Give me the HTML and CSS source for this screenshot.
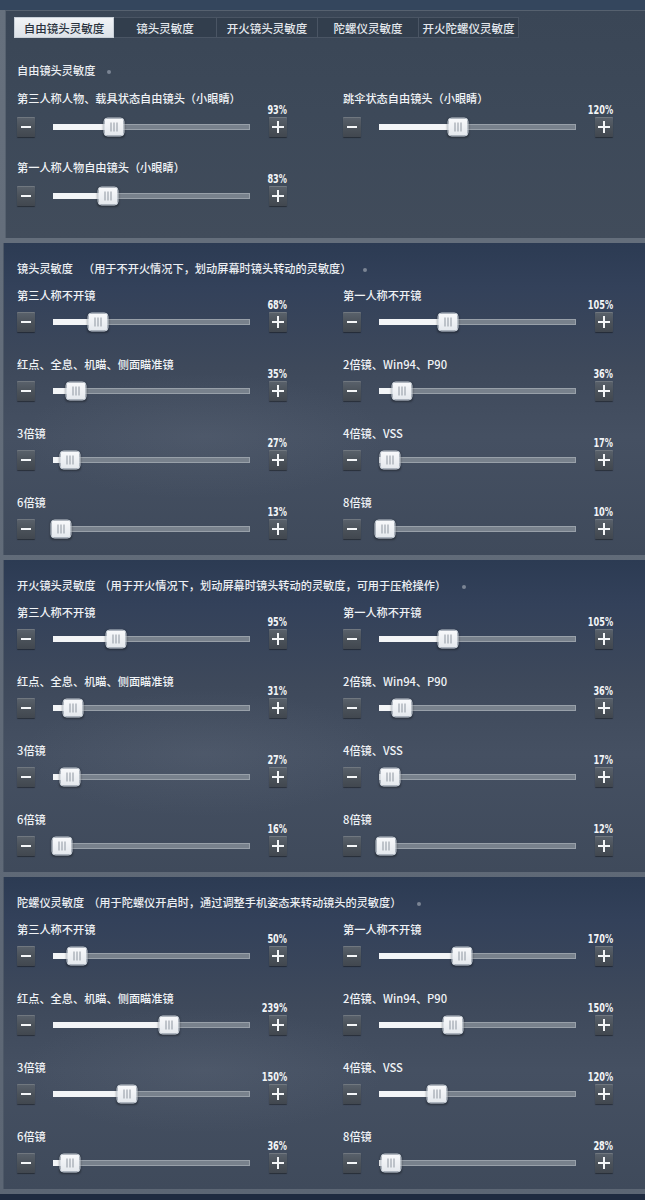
FILE: index.html
```html
<!DOCTYPE html>
<html lang="zh-CN">
<head>
<meta charset="utf-8">
<title>灵敏度设置</title>
<link rel="stylesheet" href="styles.css">
</head>
<body>
<div class="top-strip"></div>

<section class="panel panel-first">
  <nav class="tabs">
    <div class="tab tab-active t1">自由镜头灵敏度</div>
    <div class="tab t2">镜头灵敏度</div>
    <div class="tab t3">开火镜头灵敏度</div>
    <div class="tab t4">陀螺仪灵敏度</div>
    <div class="tab t5">开火陀螺仪灵敏度</div>
  </nav>
  <h2 class="title">自由镜头灵敏度<span class="dot"></span></h2>
  <div class="grid grid-roomy">
    <div class="row">
      <div class="label">第三人称人物、载具状态自由镜头（小眼睛）</div>
      <div class="ctrl">
        <div class="btn minus"></div>
        <div class="track"><div class="bar" style="--v:30.6%"><div class="fill"></div><div class="thumb"><i></i><i></i><i></i></div></div></div>
        <div class="end"><div class="pct">93%</div><div class="btn plus"></div></div>
      </div>
    </div>
    <div class="row">
      <div class="label">跳伞状态自由镜头（小眼睛）</div>
      <div class="ctrl">
        <div class="btn minus"></div>
        <div class="track"><div class="bar" style="--v:40%"><div class="fill"></div><div class="thumb"><i></i><i></i><i></i></div></div></div>
        <div class="end"><div class="pct">120%</div><div class="btn plus"></div></div>
      </div>
    </div>
    <div class="row">
      <div class="label">第一人称人物自由镜头（小眼睛）</div>
      <div class="ctrl">
        <div class="btn minus"></div>
        <div class="track"><div class="bar" style="--v:27.5%"><div class="fill"></div><div class="thumb"><i></i><i></i><i></i></div></div></div>
        <div class="end"><div class="pct">83%</div><div class="btn plus"></div></div>
      </div>
    </div>
  </div>
</section>

<section class="panel">
  <h2 class="title">镜头灵敏度<span class="note note-wide">（用于不开火情况下，划动屏幕时镜头转动的灵敏度）</span><span class="dot"></span></h2>
  <div class="grid">
    <div class="row"><div class="label">第三人称不开镜</div><div class="ctrl"><div class="btn minus"></div><div class="track"><div class="bar" style="--v:22.4%"><div class="fill"></div><div class="thumb"><i></i><i></i><i></i></div></div></div><div class="end"><div class="pct">68%</div><div class="btn plus"></div></div></div></div>
    <div class="row"><div class="label">第一人称不开镜</div><div class="ctrl"><div class="btn minus"></div><div class="track"><div class="bar" style="--v:34.7%"><div class="fill"></div><div class="thumb"><i></i><i></i><i></i></div></div></div><div class="end"><div class="pct">105%</div><div class="btn plus"></div></div></div></div>
    <div class="row"><div class="label">红点、全息、机瞄、侧面瞄准镜</div><div class="ctrl"><div class="btn minus"></div><div class="track"><div class="bar" style="--v:11.2%"><div class="fill"></div><div class="thumb"><i></i><i></i><i></i></div></div></div><div class="end"><div class="pct">35%</div><div class="btn plus"></div></div></div></div>
    <div class="row"><div class="label">2倍镜、Win94、P90</div><div class="ctrl"><div class="btn minus"></div><div class="track"><div class="bar" style="--v:11.2%"><div class="fill"></div><div class="thumb"><i></i><i></i><i></i></div></div></div><div class="end"><div class="pct">36%</div><div class="btn plus"></div></div></div></div>
    <div class="row"><div class="label">3倍镜</div><div class="ctrl"><div class="btn minus"></div><div class="track"><div class="bar" style="--v:8.2%"><div class="fill"></div><div class="thumb"><i></i><i></i><i></i></div></div></div><div class="end"><div class="pct">27%</div><div class="btn plus"></div></div></div></div>
    <div class="row"><div class="label">4倍镜、VSS</div><div class="ctrl"><div class="btn minus"></div><div class="track"><div class="bar" style="--v:5.1%"><div class="fill"></div><div class="thumb"><i></i><i></i><i></i></div></div></div><div class="end"><div class="pct">17%</div><div class="btn plus"></div></div></div></div>
    <div class="row"><div class="label">6倍镜</div><div class="ctrl"><div class="btn minus"></div><div class="track"><div class="bar" style="--v:3.6%"><div class="fill"></div><div class="thumb"><i></i><i></i><i></i></div></div></div><div class="end"><div class="pct">13%</div><div class="btn plus"></div></div></div></div>
    <div class="row"><div class="label">8倍镜</div><div class="ctrl"><div class="btn minus"></div><div class="track"><div class="bar" style="--v:2.5%"><div class="fill"></div><div class="thumb"><i></i><i></i><i></i></div></div></div><div class="end"><div class="pct">10%</div><div class="btn plus"></div></div></div></div>
  </div>
</section>

<section class="panel">
  <h2 class="title">开火镜头灵敏度<span class="note">（用于开火情况下，划动屏幕时镜头转动的灵敏度，可用于压枪操作）</span><span class="dot dot-far"></span></h2>
  <div class="grid">
    <div class="row"><div class="label">第三人称不开镜</div><div class="ctrl"><div class="btn minus"></div><div class="track"><div class="bar" style="--v:31.6%"><div class="fill"></div><div class="thumb"><i></i><i></i><i></i></div></div></div><div class="end"><div class="pct">95%</div><div class="btn plus"></div></div></div></div>
    <div class="row"><div class="label">第一人称不开镜</div><div class="ctrl"><div class="btn minus"></div><div class="track"><div class="bar" style="--v:35%"><div class="fill"></div><div class="thumb"><i></i><i></i><i></i></div></div></div><div class="end"><div class="pct">105%</div><div class="btn plus"></div></div></div></div>
    <div class="row"><div class="label">红点、全息、机瞄、侧面瞄准镜</div><div class="ctrl"><div class="btn minus"></div><div class="track"><div class="bar" style="--v:9.7%"><div class="fill"></div><div class="thumb"><i></i><i></i><i></i></div></div></div><div class="end"><div class="pct">31%</div><div class="btn plus"></div></div></div></div>
    <div class="row"><div class="label">2倍镜、Win94、P90</div><div class="ctrl"><div class="btn minus"></div><div class="track"><div class="bar" style="--v:11.2%"><div class="fill"></div><div class="thumb"><i></i><i></i><i></i></div></div></div><div class="end"><div class="pct">36%</div><div class="btn plus"></div></div></div></div>
    <div class="row"><div class="label">3倍镜</div><div class="ctrl"><div class="btn minus"></div><div class="track"><div class="bar" style="--v:8.2%"><div class="fill"></div><div class="thumb"><i></i><i></i><i></i></div></div></div><div class="end"><div class="pct">27%</div><div class="btn plus"></div></div></div></div>
    <div class="row"><div class="label">4倍镜、VSS</div><div class="ctrl"><div class="btn minus"></div><div class="track"><div class="bar" style="--v:5.1%"><div class="fill"></div><div class="thumb"><i></i><i></i><i></i></div></div></div><div class="end"><div class="pct">17%</div><div class="btn plus"></div></div></div></div>
    <div class="row"><div class="label">6倍镜</div><div class="ctrl"><div class="btn minus"></div><div class="track"><div class="bar" style="--v:4.1%"><div class="fill"></div><div class="thumb"><i></i><i></i><i></i></div></div></div><div class="end"><div class="pct">16%</div><div class="btn plus"></div></div></div></div>
    <div class="row"><div class="label">8倍镜</div><div class="ctrl"><div class="btn minus"></div><div class="track"><div class="bar" style="--v:3.1%"><div class="fill"></div><div class="thumb"><i></i><i></i><i></i></div></div></div><div class="end"><div class="pct">12%</div><div class="btn plus"></div></div></div></div>
  </div>
</section>

<section class="panel">
  <h2 class="title">陀螺仪灵敏度<span class="note">（用于陀螺仪开启时，通过调整手机姿态来转动镜头的灵敏度）</span><span class="dot dot-far"></span></h2>
  <div class="grid">
    <div class="row"><div class="label">第三人称不开镜</div><div class="ctrl"><div class="btn minus"></div><div class="track"><div class="bar" style="--v:11.7%"><div class="fill"></div><div class="thumb"><i></i><i></i><i></i></div></div></div><div class="end"><div class="pct">50%</div><div class="btn plus"></div></div></div></div>
    <div class="row"><div class="label">第一人称不开镜</div><div class="ctrl"><div class="btn minus"></div><div class="track"><div class="bar" style="--v:42.3%"><div class="fill"></div><div class="thumb"><i></i><i></i><i></i></div></div></div><div class="end"><div class="pct">170%</div><div class="btn plus"></div></div></div></div>
    <div class="row"><div class="label">红点、全息、机瞄、侧面瞄准镜</div><div class="ctrl"><div class="btn minus"></div><div class="track"><div class="bar" style="--v:59.2%"><div class="fill"></div><div class="thumb"><i></i><i></i><i></i></div></div></div><div class="end"><div class="pct">239%</div><div class="btn plus"></div></div></div></div>
    <div class="row"><div class="label">2倍镜、Win94、P90</div><div class="ctrl"><div class="btn minus"></div><div class="track"><div class="bar" style="--v:37.2%"><div class="fill"></div><div class="thumb"><i></i><i></i><i></i></div></div></div><div class="end"><div class="pct">150%</div><div class="btn plus"></div></div></div></div>
    <div class="row"><div class="label">3倍镜</div><div class="ctrl"><div class="btn minus"></div><div class="track"><div class="bar" style="--v:37.4%"><div class="fill"></div><div class="thumb"><i></i><i></i><i></i></div></div></div><div class="end"><div class="pct">150%</div><div class="btn plus"></div></div></div></div>
    <div class="row"><div class="label">4倍镜、VSS</div><div class="ctrl"><div class="btn minus"></div><div class="track"><div class="bar" style="--v:29.2%"><div class="fill"></div><div class="thumb"><i></i><i></i><i></i></div></div></div><div class="end"><div class="pct">120%</div><div class="btn plus"></div></div></div></div>
    <div class="row"><div class="label">6倍镜</div><div class="ctrl"><div class="btn minus"></div><div class="track"><div class="bar" style="--v:8.2%"><div class="fill"></div><div class="thumb"><i></i><i></i><i></i></div></div></div><div class="end"><div class="pct">36%</div><div class="btn plus"></div></div></div></div>
    <div class="row"><div class="label">8倍镜</div><div class="ctrl"><div class="btn minus"></div><div class="track"><div class="bar" style="--v:5.6%"><div class="fill"></div><div class="thumb"><i></i><i></i><i></i></div></div></div><div class="end"><div class="pct">28%</div><div class="btn plus"></div></div></div></div>
  </div>
</section>

<div class="bottom-strip"></div>
</body>
</html>
```

FILE: styles.css
```css
* { box-sizing: border-box; }

html, body {
  margin: 0;
  padding: 0;
}

body {
  width: 645px;
  background: linear-gradient(180deg, #66707d, #5c6674);
  font-family: "Noto Sans CJK SC", "Noto Sans", sans-serif;
  color: #e9edf1;
}

.top-strip {
  height: 10px;
  background: #34465d;
}

.bottom-strip {
  height: 8px;
  margin-top: 5px;
  background: #1f2b40;
}

.panel {
  margin-top: 5px;
  margin-left: 3px;
  border-left: 1px solid #4d5867;
  padding: 18px 0 16px 13px;
  background:
    radial-gradient(ellipse 260px 90px at 200px 62%, rgba(120, 130, 145, 0.16), rgba(120, 130, 145, 0) 70%),
    linear-gradient(180deg, #2c3b53 0%, #33415a 14%, #3e495b 40%, #455062 62%, #3f4a5b 100%);
}

.panel-first {
  margin-top: 0;
  margin-left: 5px;
  border-top: 1px solid #56616f;
  border-left: 1px solid #56616f;
  padding: 6px 0 32px 11px;
  background: linear-gradient(180deg, #3a4656 0%, #3d4959 45%, #414c5b 100%);
}

/* tabs */
.tabs {
  display: flex;
  margin-left: -3px;
  margin-bottom: 25px;
}

.tab {
  height: 21px;
  line-height: 21px;
  text-align: center;
  font-size: 11.5px;
  font-weight: 500;
  color: #e3e7ec;
  background: #323e4d;
  border: 1px solid #4a5564;
  border-left: none;
  white-space: nowrap;
}

.t1 { width: 100px; }
.t2 { width: 103px; }
.t3 { width: 101px; }
.t4 { width: 101px; }
.t5 { width: 100px; }

.tab-active {
  background: linear-gradient(180deg, #f1f3f6, #dde2e8);
  color: #2a323d;
  border: 1px solid #c9d0d8;
}

/* section title */
.title {
  margin: 0 0 13px;
  font-size: 11.2px;
  font-weight: 500;
  line-height: 14px;
  height: 14px;
  white-space: nowrap;
  color: #eceff3;
}

.panel-first .title { margin-bottom: 14px; }

.note { margin-left: 4px; }
.note-wide { margin-left: 10px; }

.dot {
  display: inline-block;
  width: 4px;
  height: 4px;
  border-radius: 50%;
  background: #7b8594;
  margin-left: 12px;
  vertical-align: middle;
}

.dot-far { margin-left: 16px; }

/* grid of slider rows */
.grid {
  display: grid;
  grid-template-columns: 270px 270px;
  column-gap: 56px;
  row-gap: 25px;
}

.grid-roomy { row-gap: 23px; }
.grid-roomy .label { margin-bottom: 2px; }

.row { min-width: 0; }

.label {
  font-size: 11.2px;
  font-weight: 500;
  line-height: 14px;
  height: 14px;
  white-space: nowrap;
  color: #f0f3f6;
}

.ctrl {
  display: flex;
  align-items: flex-end;
}

.btn {
  position: relative;
  flex: none;
  width: 18px;
  height: 20px;
  background: linear-gradient(180deg, #5a626c 0%, #4a5159 55%, #41474f 100%);
  box-shadow: inset 0 1px 0 rgba(255, 255, 255, 0.14), 0 1px 1px rgba(0, 0, 0, 0.4);
  border-radius: 1px;
}

.minus::before {
  content: "";
  position: absolute;
  left: 4px;
  top: 9px;
  width: 10px;
  height: 2px;
  background: #f4f6f8;
}

.plus::before,
.plus::after {
  content: "";
  position: absolute;
  background: #f4f6f8;
}

.plus::before {
  left: 3px;
  top: 9px;
  width: 12px;
  height: 2px;
}

.plus::after {
  left: 8px;
  top: 4px;
  width: 2px;
  height: 12px;
}

.track {
  flex: 1;
  height: 20px;
  margin: 0 19px 0 18px;
  display: flex;
  align-items: center;
}

.bar {
  position: relative;
  width: 100%;
  height: 6px;
  background: #78818c;
  border: 1px solid #98a0a9;
}

.fill {
  position: absolute;
  left: -1px;
  top: -1px;
  height: 6px;
  width: var(--v);
  background: #f3f5f7;
}

.thumb {
  position: absolute;
  top: 50%;
  left: var(--v);
  width: 21px;
  height: 19px;
  transform: translate(-50%, -50%);
  border-radius: 4px;
  background: linear-gradient(180deg, #f8f9fb 0%, #e4e8ed 100%);
  border: 1px solid #c3cad2;
  box-shadow: 0 1px 2px rgba(0, 0, 0, 0.35);
  display: flex;
  align-items: center;
  justify-content: center;
  gap: 2px;
}

.thumb i {
  display: block;
  width: 1px;
  height: 9px;
  background: #8e96a0;
}

.end {
  flex: none;
  width: 18px;
  display: flex;
  flex-direction: column;
  align-items: flex-end;
}

.pct {
  height: 10px;
  line-height: 10px;
  font-family: "DejaVu Sans", "Liberation Sans", sans-serif;
  font-stretch: condensed;
  font-weight: 700;
  font-size: 13px;
  color: #f3f5f7;
  white-space: nowrap;
  transform: translateY(-2px) scaleX(0.7);
  transform-origin: right center;
}
```
